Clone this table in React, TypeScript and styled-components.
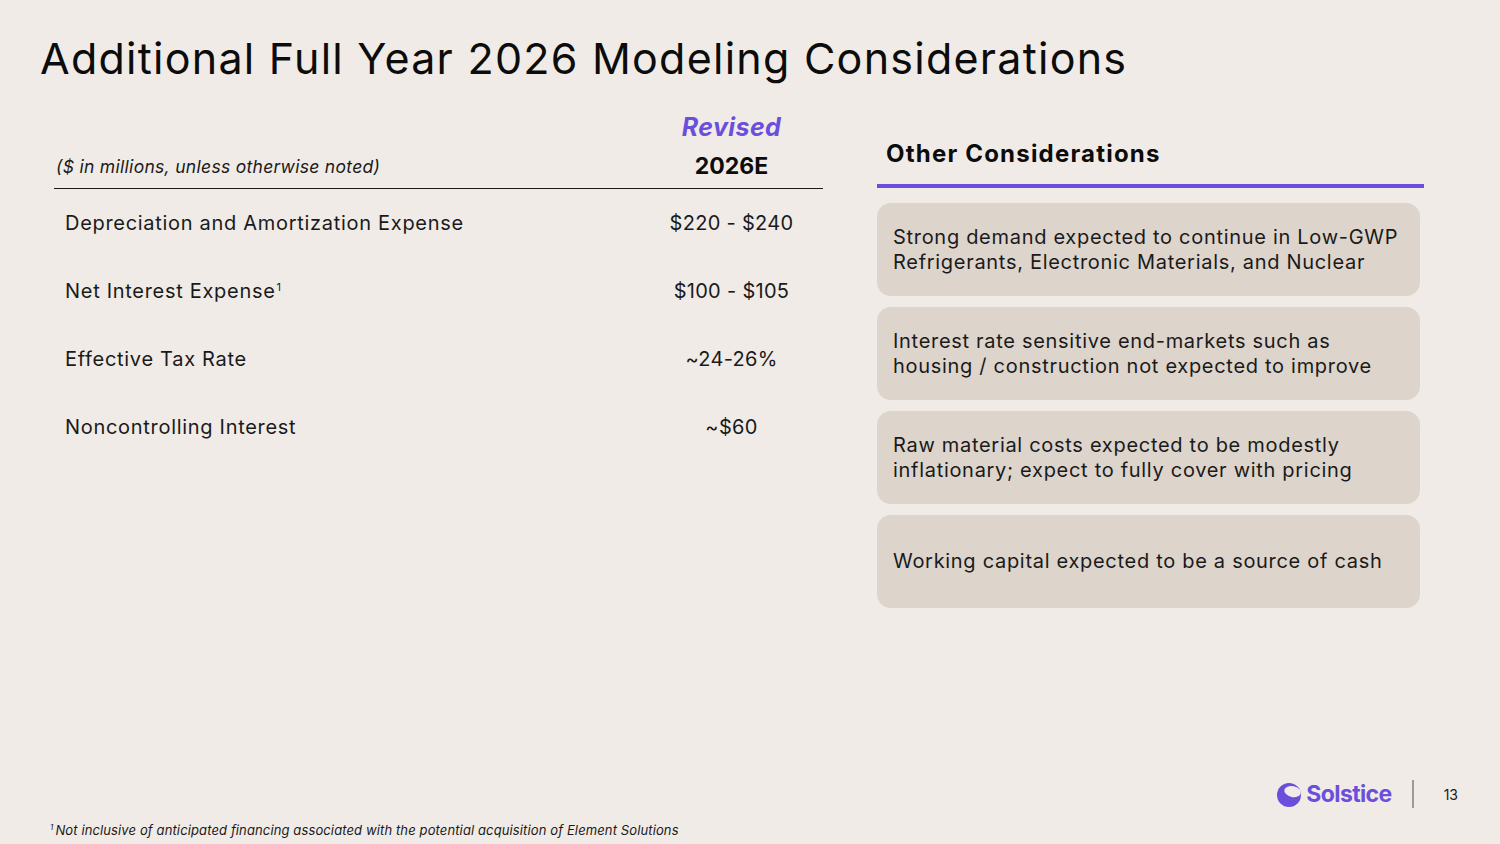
import React from "react";
import styled, { createGlobalStyle } from "styled-components";

const Global = createGlobalStyle`
  html, body { margin: 0; padding: 0; background: #f0ebe7; }
  * { box-sizing: border-box; }
`;

const FONT = `"Inter", "Noto Sans", "Liberation Sans", sans-serif`;

const Page = styled.div`
  width: 1500px;
  height: 844px;
  background: #f0ebe7;
  font-family: ${FONT};
  color: #111;
  display: flex;
  flex-direction: column;
  overflow: hidden;
`;

const Title = styled.h1`
  margin: 0;
  padding: 31px 0 0 40px;
  font-size: 43px;
  line-height: 54px;
  font-weight: 400;
  letter-spacing: 1.25px;
  color: #0c0c0c;
`;

const Main = styled.div`
  display: grid;
  grid-template-columns: 769px 547px;
  column-gap: 54px;
  padding-left: 54px;
  align-items: start;
`;

const Table = styled.div`
  display: flex;
  flex-direction: column;
`;

const HeaderGrid = styled.div`
  display: grid;
  grid-template-columns: 1fr 183px;
  grid-template-rows: 30px 30px;
  row-gap: 9px;
  padding-top: 27px;
  padding-bottom: 7px;
  border-bottom: 1.5px solid #1a1a1a;
  align-items: center;
`;

const Revised = styled.div`
  grid-column: 2;
  text-align: center;
  color: #6b4fdc;
  font-weight: 700;
  font-style: italic;
  font-size: 25px;
  letter-spacing: 0.4px;
`;

const Units = styled.div`
  grid-column: 1;
  padding-left: 2px;
  font-style: italic;
  font-size: 17.5px;
  letter-spacing: 0.3px;
  color: #1a1a1a;
`;

const YearHead = styled.div`
  grid-column: 2;
  text-align: center;
  font-weight: 700;
  font-size: 23px;
  color: #0c0c0c;
`;

const Row = styled.div`
  display: grid;
  grid-template-columns: 1fr 183px;
  height: 68px;
  align-items: center;
`;

const Label = styled.div`
  padding-left: 11px;
  font-size: 20px;
  letter-spacing: 0.7px;
  color: #1a1a1a;
`;

const Value = styled.div`
  text-align: center;
  font-size: 20px;
  letter-spacing: 0.3px;
  color: #1a1a1a;
`;

const Sup = styled.sup`
  font-size: 11px;
  line-height: 0;
  vertical-align: 7px;
  margin-left: 1px;
`;

const Side = styled.div`
  display: flex;
  flex-direction: column;
`;

const SideHeading = styled.div`
  margin-top: 54px;
  padding-left: 9px;
  font-size: 24px;
  line-height: 30px;
  font-weight: 700;
  letter-spacing: 1.2px;
  color: #0c0c0c;
`;

const Rule = styled.div`
  margin-top: 15px;
  height: 4px;
  background: #6b4fdc;
`;

const Cards = styled.div`
  margin-top: 15px;
  display: flex;
  flex-direction: column;
  gap: 11px;
  width: 543px;
`;

const Card = styled.div`
  height: 93px;
  border-radius: 14px;
  background: #ddd4cc;
  display: flex;
  align-items: center;
  padding: 0 12px 0 16px;
  font-size: 20px;
  line-height: 25px;
  letter-spacing: 0.7px;
  color: #1a1a1a;
`;

const Footer = styled.div`
  margin-top: auto;
  height: 74px;
  display: flex;
  justify-content: space-between;
  padding: 0 42px 0 50px;
`;

const Footnote = styled.div`
  align-self: flex-end;
  padding-bottom: 6px;
  font-size: 13px;
  font-style: italic;
  letter-spacing: 0.12px;
  color: #1a1a1a;
`;

const FootSup = styled.sup`
  font-size: 8px;
  line-height: 0;
  vertical-align: 5px;
  margin-right: 2px;
`;

const Brand = styled.div`
  display: flex;
  align-items: center;
  height: 40px;
  margin-top: 4px;
`;

const BrandName = styled.span`
  margin-left: 4px;
  font-size: 23px;
  font-weight: 700;
  letter-spacing: -0.6px;
  color: #6b4fdc;
`;

const Divider = styled.span`
  width: 2px;
  height: 28px;
  background: #9c9a98;
  margin: 0 30px 0 20px;
`;

const PageNum = styled.span`
  font-size: 14px;
  color: #1a1a1a;
`;

const Logo = () => (
  <svg width="25" height="28" viewBox="0 0 25 28" aria-hidden>
    <circle cx="12" cy="15" r="12" fill="#6b4fdc" />
    <ellipse cx="15.6" cy="11.6" rx="8.4" ry="5.4" transform="rotate(12 15.6 11.6)" fill="#f0ebe7" />
  </svg>
);

const rows: { label: string; value: string; note?: boolean }[] = [
  { label: "Depreciation and Amortization Expense", value: "$220 - $240" },
  { label: "Net Interest Expense", value: "$100 - $105", note: true },
  { label: "Effective Tax Rate", value: "~24-26%" },
  { label: "Noncontrolling Interest", value: "~$60" },
];

const considerations = [
  "Strong demand expected to continue in Low-GWP Refrigerants, Electronic Materials, and Nuclear",
  "Interest rate sensitive end-markets such as housing / construction not expected to improve",
  "Raw material costs expected to be modestly inflationary; expect to fully cover with pricing",
  "Working capital expected to be a source of cash",
];

export default function App() {
  return (
    <>
      <Global />
      <Page>
        <Title>Additional Full Year 2026 Modeling Considerations</Title>
        <Main>
          <Table>
            <HeaderGrid>
              <Revised>Revised</Revised>
              <Units>($ in millions, unless otherwise noted)</Units>
              <YearHead>2026E</YearHead>
            </HeaderGrid>
            {rows.map((r) => (
              <Row key={r.label}>
                <Label>
                  {r.label}
                  {r.note && <Sup>1</Sup>}
                </Label>
                <Value>{r.value}</Value>
              </Row>
            ))}
          </Table>
          <Side>
            <SideHeading>Other Considerations</SideHeading>
            <Rule />
            <Cards>
              {considerations.map((c) => (
                <Card key={c}>{c}</Card>
              ))}
            </Cards>
          </Side>
        </Main>
        <Footer>
          <Footnote>
            <FootSup>1</FootSup>
            Not inclusive of anticipated financing associated with the potential acquisition of Element Solutions
          </Footnote>
          <Brand>
            <Logo />
            <BrandName>Solstice</BrandName>
            <Divider />
            <PageNum>13</PageNum>
          </Brand>
        </Footer>
      </Page>
    </>
  );
}
